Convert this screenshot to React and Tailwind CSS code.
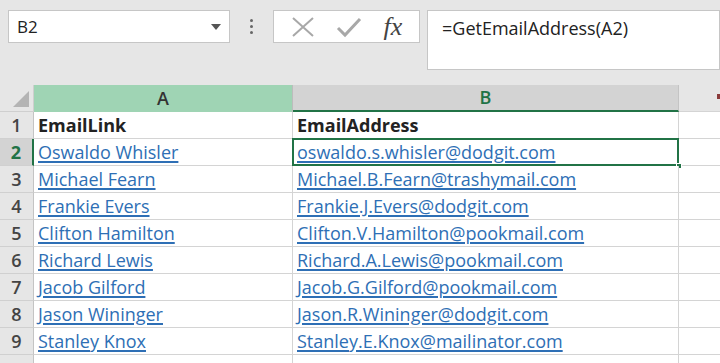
import React from 'react';

const rows = [
  ['EmailLink', 'EmailAddress'],
  ['Oswaldo Whisler', 'oswaldo.s.whisler@dodgit.com'],
  ['Michael Fearn', 'Michael.B.Fearn@trashymail.com'],
  ['Frankie Evers', 'Frankie.J.Evers@dodgit.com'],
  ['Clifton Hamilton', 'Clifton.V.Hamilton@pookmail.com'],
  ['Richard Lewis', 'Richard.A.Lewis@pookmail.com'],
  ['Jacob Gilford', 'Jacob.G.Gilford@pookmail.com'],
  ['Jason Wininger', 'Jason.R.Wininger@dodgit.com'],
  ['Stanley Knox', 'Stanley.E.Knox@mailinator.com'],
];

const link = 'text-[#2e6fb5] underline decoration-[#2e6fb5] underline-offset-[2px] decoration-[1.5px]';

export default function App() {
  return (
    <div className="w-[720px] h-[363px] overflow-hidden bg-[#e6e6e6] text-[18px] text-[#222]" style={{ fontFamily: '"Open Sans", "Noto Sans", sans-serif' }}>
      {/* barra de fórmulas */}
      <div className="flex items-start h-[85px] pt-[10px] pl-[8px]">
        <div className="w-[222px] h-[33px] bg-white border border-[#c6c6c6] flex items-center justify-between pl-[8px] pr-[8px]">
          <span className="text-[17px]">B2</span>
          <svg width="10" height="6" viewBox="0 0 10 6"><path d="M0 0h10L5 6z" fill="#555" /></svg>
        </div>
        <div className="w-[43px] h-[33px] flex flex-col items-center justify-center gap-[3px]">
          <span className="w-[3px] h-[3px] bg-[#666] rounded-full" />
          <span className="w-[3px] h-[3px] bg-[#666] rounded-full" />
          <span className="w-[3px] h-[3px] bg-[#666] rounded-full" />
        </div>
        <div className="w-[147px] h-[33px] bg-white border border-[#c6c6c6] flex items-center justify-around px-[6px]">
          <svg width="24" height="22" viewBox="0 0 24 22"><path d="M2 2l20 18M22 2L2 20" stroke="#a8a8a8" strokeWidth="2" fill="none" /></svg>
          <svg width="26" height="22" viewBox="0 0 26 22"><path d="M2 12l7 7L24 3" stroke="#a8a8a8" strokeWidth="3" fill="none" /></svg>
          <span className="italic text-[26px] leading-none text-[#444]" style={{ fontFamily: '"Liberation Serif", serif' }}>fx</span>
        </div>
        <div className="ml-[7px] flex-1 h-[60px] bg-white border border-[#c6c6c6] pl-[14px] pt-[4px] text-[18px]">=GetEmailAddress(A2)</div>
      </div>

      {/* planilha */}
      <div className="grid grid-cols-[34px_259px_386px_1fr] auto-rows-[27px]">
        <div className="relative bg-[#e6e6e6] border-r border-b border-[#cfcfcf]">
          <svg className="absolute right-[4px] bottom-[4px]" width="16" height="16" viewBox="0 0 16 16"><path d="M16 0v16H0z" fill="#b4b4b4" /></svg>
        </div>
        <div className="bg-[#9fd4b4] border-r border-[#bcbcbc] flex items-center justify-center text-[#333] font-semibold">A</div>
        <div className="bg-[#d3d3d3] border-b-2 border-[#217346] flex items-center justify-center text-[#217346] font-semibold border-r border-r-[#c4c4c4]">B</div>
        <div className="relative bg-[#e6e6e6] border-b border-[#d4d4d4]">
          <span className="absolute right-0 top-[9px] w-[3px] h-[5px] bg-[#8a3a3a]" />
        </div>

        {rows.map((r, i) => {
          const sel = i === 1;
          return (
            <React.Fragment key={i}>
              <div className={`flex items-center justify-center border-b border-[#d0d0d0] ${sel ? 'bg-[#d3d3d3] text-[#217346] font-bold border-r-2 border-r-[#217346]' : 'bg-[#e6e6e6] text-[#444] font-semibold border-r border-r-[#c4c4c4]'}`}>{i + 1}</div>
              <div className={`bg-white border-r border-b border-[#d4d4d4] flex items-center pl-[4px] whitespace-nowrap ${i === 0 ? 'font-bold' : link}`}>{r[0]}</div>
              <div className={`relative bg-white border-r border-b border-[#d4d4d4] flex items-center pl-[4px] whitespace-nowrap ${i === 0 ? 'font-bold' : link}`}>
                {r[1]}
                {sel && (
                  <>
                    <span className="absolute -left-px -top-px -right-px -bottom-px border-2 border-[#217346] pointer-events-none" />
                    <span className="absolute -right-[4px] -bottom-[4px] w-[6px] h-[6px] bg-[#217346] border border-white" />
                  </>
                )}
              </div>
              <div className="bg-white border-b border-[#d4d4d4]" />
            </React.Fragment>
          );
        })}
        <div className="bg-[#e6e6e6] border-r border-[#c4c4c4]" />
        <div className="bg-white border-r border-[#d4d4d4]" />
        <div className="bg-white border-r border-[#d4d4d4]" />
        <div className="bg-white" />
      </div>
    </div>
  );
}
